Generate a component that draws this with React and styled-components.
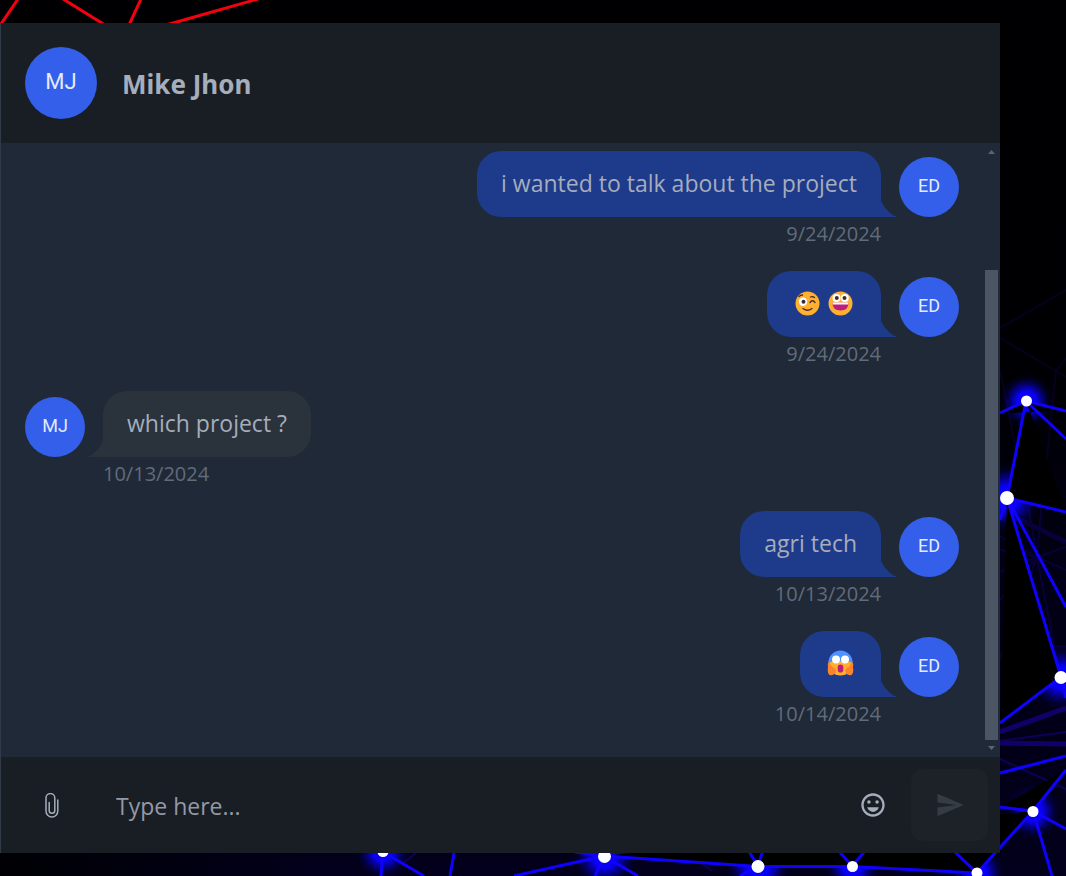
import React from "react";
import styled, { createGlobalStyle, css } from "styled-components";
import { MdOutlineEmojiEmotions, MdSend } from "react-icons/md";

const GlobalStyle = createGlobalStyle`
  *, *::before, *::after { box-sizing: border-box; }
  body {
    margin: 0;
    background: #000004;
    color: #a6adbb;
    font-family: "Open Sans", "Noto Sans", sans-serif;
  }
`;

const Page = styled.div`
  position: relative;
  display: flex;
  min-height: 100vh;
  padding: 23px 66px 23px 0;
  overflow: hidden;
`;

const Backdrop = styled.svg`
  position: absolute;
  inset: 0;
  width: 100%;
  height: 100%;
`;

const Panel = styled.main`
  position: relative;
  flex: 1;
  min-width: 0;
  display: flex;
  flex-direction: column;
  border-left: 1px solid #303a49;
  background: #1f2937;
`;

const Header = styled.header`
  display: flex;
  align-items: center;
  gap: 25px;
  padding: 24px;
  background: #191e24;
`;

const ContactName = styled.h1`
  margin: 0;
  padding-top: 2px;
  font-family: "Noto Sans", sans-serif;
  font-size: 26px;
  line-height: 36px;
  font-weight: 700;
`;

const Avatar = styled.div`
  flex: none;
  width: ${(p) => (p.$large ? 72 : 60)}px;
  height: ${(p) => (p.$large ? 72 : 60)}px;
  padding-bottom: 2px;
  border-radius: 50%;
  display: flex;
  align-items: center;
  justify-content: center;
  background: #335fea;
  color: #e4eafc;
  font-family: Roboto, sans-serif;
  font-size: ${(p) => (p.$large ? 22 : 18)}px;
  line-height: 24px;
`;

const Conversation = styled.section`
  flex: 1;
  display: flex;
`;

const MessageList = styled.ol`
  flex: 1;
  min-width: 0;
  margin: 0;
  padding: 8px 24px 6px;
  list-style: none;
  display: flex;
  flex-direction: column;
  gap: 20px;
`;

const Message = styled.li`
  display: flex;
  flex-direction: column;
  align-items: ${(p) => (p.$own ? "flex-end" : "flex-start")};
`;

const MessageRow = styled.div`
  display: flex;
  flex-direction: ${(p) => (p.$own ? "row" : "row-reverse")};
  align-items: flex-end;
  gap: 18px;
`;

const Bubble = styled.div`
  position: relative;
  min-height: 66px;
  padding: 14px 24px 16px;
  font-size: 23px;
  line-height: 36px;
  display: flex;
  align-items: center;
  ${(p) =>
    p.$own
      ? css`
          background: #1e3a8a;
          border-radius: 24px 24px 0 24px;
        `
      : css`
          background: #2a323c;
          border-radius: 24px 24px 24px 0;
        `}
`;

const Tail = styled.svg`
  position: absolute;
  bottom: 0;
  width: 16px;
  height: 16px;
  ${(p) =>
    p.$own
      ? css`
          left: 100%;
          fill: #1e3a8a;
        `
      : css`
          right: 100%;
          fill: #2a323c;
          transform: scaleX(-1);
        `}
`;

const Sent = styled.time`
  padding: 0 78px;
  font-size: 20px;
  line-height: 34px;
  color: #626b79;
`;

const EmojiRow = styled.span`
  display: flex;
  gap: 6px;
  padding: 0 3px;
`;

const EmojiArt = styled.svg`
  width: 27px;
  height: 27px;
`;

const Scrollbar = styled.div`
  flex: none;
  width: 17px;
  display: flex;
  flex-direction: column;
  align-items: center;
`;

const ScrollArrow = styled.svg`
  flex: none;
  width: 17px;
  height: 17px;
  fill: #5b6470;
`;

const Track = styled.div`
  flex: 1;
  width: 13px;
  display: flex;
  align-items: flex-end;
`;

const Thumb = styled.div`
  width: 100%;
  height: 81%;
  background: #4b5563;
`;

const Composer = styled.form`
  display: flex;
  padding: 12px;
  background: #191e24;
`;

const IconButton = styled.button`
  flex: none;
  width: 77px;
  height: 72px;
  padding: 0;
  border: 0;
  border-radius: 12px;
  display: flex;
  align-items: center;
  justify-content: center;
  background: ${(p) => (p.$muted ? "#1c2228" : "transparent")};
  color: ${(p) => (p.$muted ? "#363c43" : "#a6adbb")};
`;

const TextBox = styled.input`
  flex: 1;
  min-width: 0;
  padding: 2px 26px 0;
  border: 0;
  outline: 0;
  background: transparent;
  color: #a6adbb;
  font: inherit;
  font-size: 23px;
  &::placeholder {
    color: #9499a5;
    opacity: 1;
  }
`;

const messages = [
  { id: 1, own: true, text: "i wanted to talk about the project", date: "9/24/2024" },
  { id: 2, own: true, emojis: ["wink", "grin"], date: "9/24/2024" },
  { id: 3, own: false, text: "which project ?", date: "10/13/2024" },
  { id: 4, own: true, text: "agri tech", date: "10/13/2024" },
  { id: 5, own: true, emojis: ["scream"], date: "10/14/2024" },
];

const nodes = [
  [1026.5, 401, 5.5], [1007, 498, 7], [1061, 677.5, 6.5], [1033, 811.5, 5.5],
  [977, 873, 5.5], [852.5, 866.5, 5.5], [758, 866.5, 6.5], [604.5, 856.5, 6.5],
  [383, 851.5, 5.5],
];

function Network() {
  return (
    <Backdrop viewBox="0 0 1066 876" preserveAspectRatio="xMaxYMax slice" aria-hidden="true">
      <defs>
        <radialGradient id="halo">
          <stop offset="0" stopColor="#0a00ff" />
          <stop offset="0.35" stopColor="#0a00ff" stopOpacity="0.95" />
          <stop offset="0.6" stopColor="#0800f0" stopOpacity="0.45" />
          <stop offset="0.8" stopColor="#0600d0" stopOpacity="0.14" />
          <stop offset="1" stopColor="#0500a0" stopOpacity="0" />
        </radialGradient>
        <linearGradient id="night" x1="0" y1="0" x2="0" y2="1">
          <stop offset="0" stopColor="#000002" />
          <stop offset="0.45" stopColor="#000004" />
          <stop offset="0.65" stopColor="#020014" />
          <stop offset="1" stopColor="#02001c" />
        </linearGradient>
        <linearGradient id="corner" x1="0" y1="0" x2="1" y2="0">
          <stop offset="0" stopColor="#000004" />
          <stop offset="0.3" stopColor="#000004" stopOpacity="0" />
        </linearGradient>
      </defs>
      <rect width="1066" height="876" fill="url(#night)" />
      <rect y="800" width="1066" height="76" fill="url(#corner)" />
      <g stroke="#f5000f" strokeWidth="3">
        <path d="M18-1L-1 27M63-1L105 25M141-1L129 25M258-1L166 25" />
      </g>
      <g stroke="#080038" strokeWidth="2" fill="none">
        <path d="M1000 328L1066 290M1000 338L1056 371L1066 358M1056 371L1066 377M1056 371L1042 505M1000 370L1027 505" stroke="#07001f" />
        <path d="M1037 557L1000 536M1037 557L1000 550M1037 557L1000 572M1037 557L1000 600M1037 557L1000 658M1037 557L1066 547M1037 557L1066 570M1037 557L1028 505M1037 557L1042 500M1037 557L1060 677" />
        <path d="M1000 708L1051 647L1066 646" />
        <path d="M1000 510L1066 542" strokeWidth="5" />
        <path d="M1000 732L1066 708M1000 743L1066 744" stroke="#12006a" strokeWidth="5" />
        <path d="M1000 741L1066 732M1000 759L1066 789M942 853L958 876M969 853V876M416 853L402 864M687 853L712 871M790 853L774 872" stroke="#0e0058" />
      </g>
      {nodes.map(([x, y, r]) => (
        <circle key={`${x}-${y}`} cx={x} cy={y} r={r * 5} fill="url(#halo)" />
      ))}
      <g stroke="#1000ff" strokeWidth="3">
        <path d="M1000 413L1026 401L1066 411M1026 401L1066 439M1026 401L1007 498L1066 512M1007 498L1066 607M1007 498L1061 677L1000 723M1007 498L1000 520M1061 677L1066 698" />
        <path d="M1000 773L1066 756M1066 770L1033 811L1000 807M1033 811L1066 829M1033 811L1052 876M1033 811L977 873L852 866.500L758 866.500L604 856" />
        <path d="M977 873L955 852M852 866L838 850M852 866L866 850M758 866L748 850M758 866L763 850M758 866L740 876M604 856L514 876M604 856L595 876M604 856L638 876M604 856L575 852M383 852L381 876M383 852L424 876M454 853L450 876" />
      </g>
      {nodes.map(([x, y, r]) => (
        <circle key={`${x}-${y}`} cx={x} cy={y} r={r} fill="#fff" />
      ))}
    </Backdrop>
  );
}

function Emoji({ name }) {
  if (name === "wink") {
    return (
      <EmojiArt viewBox="0 0 27 27" role="img" aria-label="Winking face">
        <circle cx="13.500" cy="13.500" r="12" fill="#ffb02e" />
        <circle cx="9" cy="11.800" r="4.200" fill="#fff" />
        <circle cx="9.500" cy="11.800" r="2" fill="#402a32" />
        <g fill="none" stroke="#402a32" strokeWidth="1.300" strokeLinecap="round">
          <path d="M5 6.500Q6.500 5 8.500 5M16 12.500Q18.500 9 21 12.500M16.500 7Q18.500 6 20.500 7.500M9 18.500Q13.500 22 18 18.500" />
        </g>
      </EmojiArt>
    );
  }
  if (name === "grin") {
    return (
      <EmojiArt viewBox="0 0 27 27" role="img" aria-label="Grinning face">
        <circle cx="13.500" cy="13.500" r="12" fill="#ffb02e" />
        <circle cx="9.500" cy="8" r="4" fill="#fff" />
        <circle cx="17.800" cy="8" r="4" fill="#fff" />
        <circle cx="9.800" cy="8" r="2" fill="#402a32" />
        <circle cx="17.500" cy="8" r="2" fill="#402a32" />
        <path d="M5.500 12.800H21.500Q21.500 20.500 13.500 20.500T5.500 12.800Z" fill="#bb1d80" />
        <path d="M5.500 12.500H21.500L21 14.500H6Z" fill="#fff" />
      </EmojiArt>
    );
  }
  return (
    <EmojiArt viewBox="0 0 27 27" role="img" aria-label="Face screaming in fear">
      <circle cx="13.500" cy="13.500" r="12" fill="#ffb02e" />
      <path d="M1.500 12.500A12 12 0 0 1 25.500 12.500Q13.500 10 1.500 12.500Z" fill="#5092ff" />
      <circle cx="9" cy="9.500" r="4" fill="#fff" />
      <circle cx="18" cy="9.500" r="4" fill="#fff" />
      <rect x="10.700" y="14.500" width="5.600" height="8" rx="2.800" fill="#bb1d80" />
      <path d="M1 17Q0 12 3 13Q4 17 7 18Q10 20 8 23Q6 26 2.500 25Q0 23 1 17ZM26 17Q27 12 24 13Q23 17 20 18Q17 20 19 23Q21 26 24.500 25Q27 23 26 17Z" fill="#ff822d" />
    </EmojiArt>
  );
}

function Paperclip() {
  return (
    <svg width="14" height="25" viewBox="0 0 14 25" fill="none" stroke="currentColor" strokeWidth="1.500" strokeLinecap="round" aria-hidden="true">
      <path d="M12.800 7V18A5.900 5.900 0 0 1 1 18V5A4.300 4.300 0 0 1 9.800 5V17.500A2.800 2.800 0 0 1 4.200 17.500V9.500" />
    </svg>
  );
}

export default function App() {
  return (
    <>
      <GlobalStyle />
      <Page>
        <Network />
        <Panel>
          <Header>
            <Avatar $large>MJ</Avatar>
            <ContactName>Mike Jhon</ContactName>
          </Header>
          <Conversation aria-label="Conversation">
            <MessageList>
              {messages.map((m) => (
                <Message key={m.id} $own={m.own}>
                  <MessageRow $own={m.own}>
                    <Bubble $own={m.own}>
                      {m.text}
                      {m.emojis && (
                        <EmojiRow>
                          {m.emojis.map((name) => (
                            <Emoji key={name} name={name} />
                          ))}
                        </EmojiRow>
                      )}
                      <Tail $own={m.own} viewBox="0 0 16 16" aria-hidden="true">
                        <path d="M0 0Q6 12 16 16H0Z" />
                      </Tail>
                    </Bubble>
                    <Avatar>{m.own ? "ED" : "MJ"}</Avatar>
                  </MessageRow>
                  <Sent>{m.date}</Sent>
                </Message>
              ))}
            </MessageList>
            <Scrollbar aria-hidden="true">
              <ScrollArrow viewBox="0 0 17 17">
                <path d="M5 11H12L8.500 7Z" />
              </ScrollArrow>
              <Track>
                <Thumb />
              </Track>
              <ScrollArrow viewBox="0 0 17 17">
                <path d="M5 6H12L8.500 10Z" />
              </ScrollArrow>
            </Scrollbar>
          </Conversation>
          <Composer onSubmit={(e) => e.preventDefault()}>
            <IconButton type="button" aria-label="Attach a file">
              <Paperclip />
            </IconButton>
            <TextBox type="text" placeholder="Type here..." aria-label="Message" />
            <IconButton type="button" aria-label="Insert emoji">
              <MdOutlineEmojiEmotions size={28} />
            </IconButton>
            <IconButton type="submit" disabled $muted aria-label="Send message">
              <MdSend size={30} />
            </IconButton>
          </Composer>
        </Panel>
      </Page>
    </>
  );
}
